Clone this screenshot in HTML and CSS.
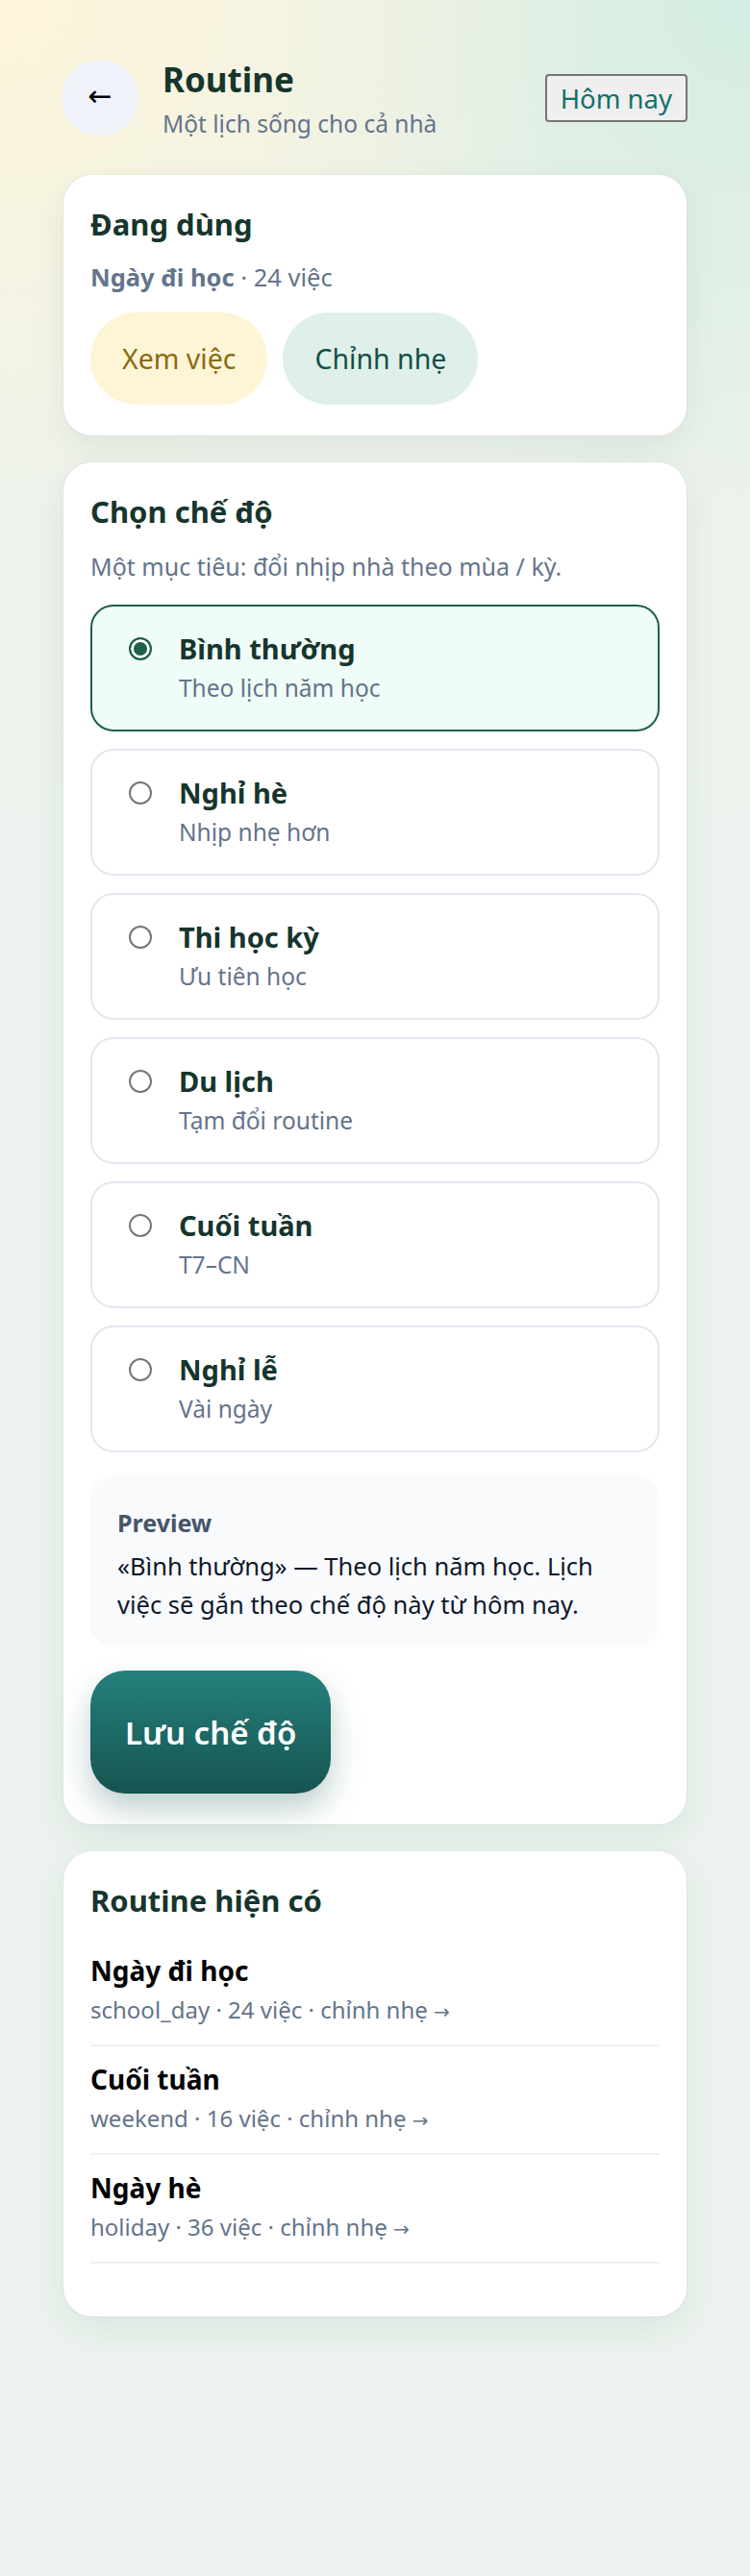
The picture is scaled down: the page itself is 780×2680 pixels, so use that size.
FILE: index.html
```html
<!DOCTYPE html>
<html lang="vi">
<head>
<meta charset="utf-8">
<title>Routine</title>
<link rel="stylesheet" href="styles.css">
</head>
<body>
<main class="page">
  <header class="header">
    <button class="back" type="button" aria-label="Quay lại">←</button>
    <div class="heading">
      <h1 class="title">Routine</h1>
      <p class="subtitle">Một lịch sống cho cả nhà</p>
    </div>
    <button class="today" type="button">Hôm nay</button>
  </header>

  <section class="card">
    <h2 class="card-title">Đang dùng</h2>
    <p class="meta meta-current"><strong>Ngày đi học</strong> · 24 việc</p>
    <div class="actions">
      <button class="pill pill-yellow" type="button">Xem việc</button>
      <button class="pill pill-mint" type="button">Chỉnh nhẹ</button>
    </div>
  </section>

  <section class="card">
    <h2 class="card-title">Chọn chế độ</h2>
    <p class="meta meta-desc">Một mục tiêu: đổi nhịp nhà theo mùa / kỳ.</p>
    <div class="options">
      <label class="option selected">
        <span class="radio"></span>
        <span class="option-text"><span class="option-title">Bình thường</span><span class="option-sub">Theo lịch năm học</span></span>
      </label>
      <label class="option">
        <span class="radio"></span>
        <span class="option-text"><span class="option-title">Nghỉ hè</span><span class="option-sub">Nhịp nhẹ hơn</span></span>
      </label>
      <label class="option">
        <span class="radio"></span>
        <span class="option-text"><span class="option-title">Thi học kỳ</span><span class="option-sub">Ưu tiên học</span></span>
      </label>
      <label class="option">
        <span class="radio"></span>
        <span class="option-text"><span class="option-title">Du lịch</span><span class="option-sub">Tạm đổi routine</span></span>
      </label>
      <label class="option">
        <span class="radio"></span>
        <span class="option-text"><span class="option-title">Cuối tuần</span><span class="option-sub">T7–CN</span></span>
      </label>
      <label class="option">
        <span class="radio"></span>
        <span class="option-text"><span class="option-title">Nghỉ lễ</span><span class="option-sub">Vài ngày</span></span>
      </label>
    </div>
    <div class="preview">
      <div class="preview-label">Preview</div>
      <p class="preview-text">«Bình thường» — Theo lịch năm học. Lịch việc sẽ gắn theo chế độ này từ hôm nay.</p>
    </div>
    <button class="save" type="button">Lưu chế độ</button>
  </section>

  <section class="card">
    <h2 class="card-title">Routine hiện có</h2>
    <ul class="routines">
      <li class="routine">
        <div class="routine-name">Ngày đi học</div>
        <div class="routine-sub">school_day · 24 việc · chỉnh nhẹ <span class="arrow">→</span></div>
      </li>
      <li class="routine">
        <div class="routine-name">Cuối tuần</div>
        <div class="routine-sub">weekend · 16 việc · chỉnh nhẹ <span class="arrow">→</span></div>
      </li>
      <li class="routine">
        <div class="routine-name">Ngày hè</div>
        <div class="routine-sub">holiday · 36 việc · chỉnh nhẹ <span class="arrow">→</span></div>
      </li>
    </ul>
  </section>
</main>
</body>
</html>
```

FILE: styles.css
```css
* { box-sizing: border-box; }

html {
  background: #ecf3ee;
}

body {
  margin: 0;
  min-height: 2680px;
  font-family: "Noto Sans", "Open Sans", sans-serif;
  color: #173a30;
  background:
    radial-gradient(ellipse 620px 560px at 0 0, rgba(253, 245, 218, 1), rgba(253, 245, 218, 0)),
    radial-gradient(ellipse 560px 560px at 100% 0, rgba(212, 237, 226, 1), rgba(212, 237, 226, 0)),
    linear-gradient(180deg, #eef2ea 0, #ecf3ee 900px);
}

.page {
  width: 648px;
  margin: 0 auto;
  padding: 62px 0 60px;
  display: flex;
  flex-direction: column;
  gap: 28px;
}

.header {
  display: flex;
  align-items: center;
  gap: 25px;
  margin: 0 0 12px -2px;
  height: 80px;
}

.back {
  width: 80px;
  height: 80px;
  flex: none;
  border: none;
  border-radius: 50%;
  background: #eff2f8;
  color: #000;
  font-size: 30px;
  line-height: 1;
  padding: 0 0 4px;
  font-family: "DejaVu Sans", sans-serif;
}

.heading {
  flex: 1;
  margin-top: 4px;
}

.title {
  margin: 0;
  font-size: 35px;
  font-weight: 700;
  line-height: 42px;
  color: #16352d;
}

.subtitle {
  margin: 8px 0 0;
  font-size: 24.5px;
  line-height: 34px;
  color: #64748b;
}

.today {
  flex: none;
  height: 50px;
  padding: 0 14px;
  border: 2px solid #767676;
  border-radius: 4px;
  background: #efefef;
  color: #11706a;
  font-family: inherit;
  font-size: 27.5px;
  margin-right: -1px;
}

.card {
  background: #fff;
  border-radius: 30px;
  padding: 30px 28px 32px;
  box-shadow: 0 12px 34px rgba(40, 80, 64, 0.08), 0 0 0 1px rgba(220, 232, 226, 0.5);
}

.card-title {
  margin: 0;
  font-size: 31px;
  font-weight: 700;
  line-height: 42px;
  color: #16352d;
}

.meta {
  margin: 17px 0 0;
  line-height: 34px;
  color: #64748b;
}

.meta-current {
  font-size: 25.5px;
}

.meta-desc {
  font-size: 25px;
  margin-top: 19px;
}

.meta strong {
  font-weight: 700;
}

.actions {
  display: flex;
  gap: 16px;
  margin-top: 20px;
}

.pill {
  height: 96px;
  padding: 0 33px;
  border: none;
  border-radius: 48px;
  font-family: inherit;
  font-size: 28.5px;
  font-weight: 400;
}

.pill-yellow {
  background: #fef5d7;
  color: #8a6a0e;
}

.pill-mint {
  background: #dfefe9;
  color: #134e47;
}

.options {
  display: flex;
  flex-direction: column;
  gap: 18px;
  margin-top: 23px;
}

.option {
  display: flex;
  align-items: flex-start;
  gap: 28px;
  padding: 26px 28px 26px 38px;
  border: 2px solid #e2e8f0;
  border-radius: 24px;
  background: #fff;
}

.option.selected {
  border-color: #1e5f4a;
  background: #effcf7;
}

.radio {
  flex: none;
  width: 24px;
  height: 24px;
  margin-top: 6px;
  border: 2px solid #767676;
  border-radius: 50%;
  background: #fff;
}

.option.selected .radio {
  border-color: #1e5f4a;
  background: #1e5f4a;
  box-shadow: inset 0 0 0 3px #fff;
}

.option-text {
  display: flex;
  flex-direction: column;
  gap: 6px;
}

.option-title {
  font-size: 29px;
  font-weight: 700;
  line-height: 36px;
  color: #16352d;
}

.option-sub {
  font-size: 24.5px;
  line-height: 34px;
  color: #64748b;
}

.preview {
  margin-top: 24px;
  padding: 30px 28px 24px;
  border-radius: 24px;
  background: #f8fafc;
}

.preview-label {
  font-size: 25px;
  font-weight: 700;
  line-height: 38px;
  color: #475569;
}

.preview-text {
  margin: 6px 0 0;
  font-size: 25.5px;
  line-height: 40px;
  color: #0f172a;
}

.save {
  display: block;
  margin-top: 25px;
  height: 128px;
  padding: 0 36px;
  border: none;
  border-radius: 36px;
  background: linear-gradient(180deg, #24807c 0%, #165450 100%);
  color: #fff;
  font-family: inherit;
  font-size: 33px;
  font-weight: 600;
  box-shadow: 0 16px 32px rgba(22, 84, 80, 0.28);
}

.routines {
  list-style: none;
  margin: 18px 0 23px;
  padding: 0;
}

.routine {
  padding: 16px 0 17px;
  border-bottom: 2px solid #eef2f6;
}

.routine-name {
  font-size: 28px;
  font-weight: 700;
  line-height: 36px;
  color: #000;
}

.routine-sub {
  margin-top: 6px;
  font-size: 24px;
  line-height: 34px;
  color: #64748b;
}

.arrow {
  font-family: "DejaVu Sans", sans-serif;
  font-size: 20px;
}
```
